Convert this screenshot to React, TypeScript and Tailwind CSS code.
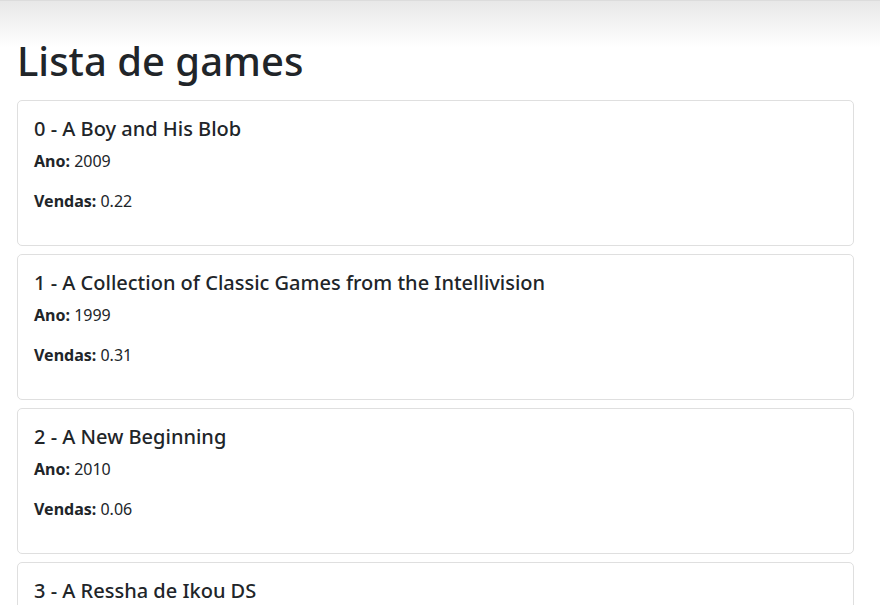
import React from "react";

const games = [
  { id: 0, name: "A Boy and His Blob", ano: 2009, vendas: "0.22" },
  { id: 1, name: "A Collection of Classic Games from the Intellivision", ano: 1999, vendas: "0.31" },
  { id: 2, name: "A New Beginning", ano: 2010, vendas: "0.06" },
  { id: 3, name: "A Ressha de Ikou DS", ano: 2009, vendas: "0.08" },
];

export default function App() {
  return (
    <div
      className="min-h-[605px] border-t border-[#dcdcdc] bg-[linear-gradient(to_bottom,#e8e8e8_0px,#ffffff_46px)] text-[#212529]"
      style={{ fontFamily: '"Noto Sans", "Open Sans", sans-serif' }}
    >
      <div className="ml-[17px] w-[837px] pt-[36px]">
        <h1 className="mb-[15px] text-[40px] leading-[48px] font-medium">Lista de games</h1>
        <div className="flex flex-col gap-[8px]">
          {games.map((g) => (
            <div key={g.id} className="rounded-[5px] border border-[#dfdfdf] bg-white p-4">
              <h5 className="mb-2 text-[20px] leading-[24px] font-medium">
                {g.id} - {g.name}
              </h5>
              <p className="mb-4 text-[16px] leading-[24px]">
                <strong className="font-bold">Ano:</strong> {g.ano}
              </p>
              <p className="mb-4 text-[16px] leading-[24px]">
                <strong className="font-bold">Vendas:</strong> {g.vendas}
              </p>
            </div>
          ))}
        </div>
      </div>
    </div>
  );
}
